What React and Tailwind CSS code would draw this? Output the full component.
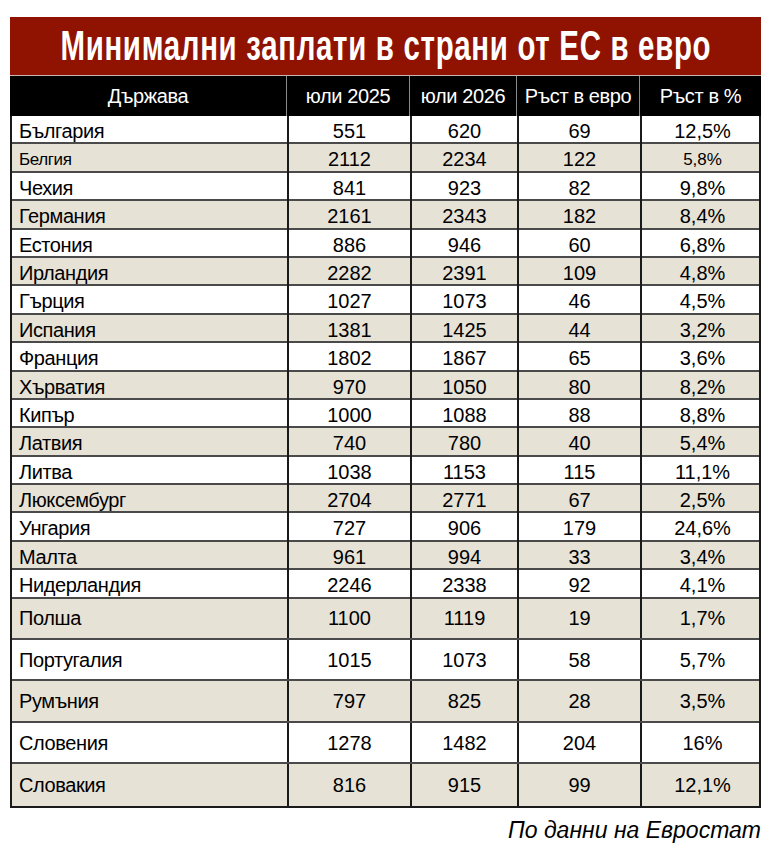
const rows = [
  ["България", "551", "620", "69", "12,5%"],
  ["Белгия", "2112", "2234", "122", "5,8%", true],
  ["Чехия", "841", "923", "82", "9,8%"],
  ["Германия", "2161", "2343", "182", "8,4%"],
  ["Естония", "886", "946", "60", "6,8%"],
  ["Ирландия", "2282", "2391", "109", "4,8%"],
  ["Гърция", "1027", "1073", "46", "4,5%"],
  ["Испания", "1381", "1425", "44", "3,2%"],
  ["Франция", "1802", "1867", "65", "3,6%"],
  ["Хърватия", "970", "1050", "80", "8,2%"],
  ["Кипър", "1000", "1088", "88", "8,8%"],
  ["Латвия", "740", "780", "40", "5,4%"],
  ["Литва", "1038", "1153", "115", "11,1%"],
  ["Люксембург", "2704", "2771", "67", "2,5%"],
  ["Унгария", "727", "906", "179", "24,6%"],
  ["Малта", "961", "994", "33", "3,4%"],
  ["Нидерландия", "2246", "2338", "92", "4,1%"],
  ["Полша", "1100", "1119", "19", "1,7%"],
  ["Португалия", "1015", "1073", "58", "5,7%"],
  ["Румъния", "797", "825", "28", "3,5%"],
  ["Словения", "1278", "1482", "204", "16%"],
  ["Словакия", "816", "915", "99", "12,1%"],
];

const cols = "grid grid-cols-[277px_123px_107px_123px_121px]";

function Row({ data, index }) {
  const [name, a, b, c, d, small] = data;
  const tall = index >= 17;
  const bg = index % 2 === 1 ? "bg-[#e7e2d6]" : "bg-white";
  const h = tall ? "h-[41.4px]" : "h-[28.4px]";
  const size = small ? "text-[17px]" : "text-[20px]";
  return (
    <div className={`${cols} ${bg} ${h} border-b-2 border-[#4a4a4a] last:border-b-0 text-black`}>
      <div className={`flex items-center pl-[7px] border-r-2 border-[#1a1a1a] ${size} tracking-[-0.4px]`}>{name}</div>
      <div className="flex items-center justify-center border-r-2 border-[#1a1a1a] text-[20px]">{a}</div>
      <div className="flex items-center justify-center border-r-2 border-[#1a1a1a] text-[20px]">{b}</div>
      <div className="flex items-center justify-center border-r-2 border-[#1a1a1a] text-[20px]">{c}</div>
      <div className={`flex items-center justify-center ${size}`}>{d}</div>
    </div>
  );
}

export default function App() {
  return (
    <div className="w-[771px] h-[849px] bg-white pt-[17px] px-[10px] font-['Liberation_Sans',Arial,sans-serif]">
      <div className="w-[751px]">
        <div className="h-[59px] bg-[#8f1300] flex items-center justify-center overflow-hidden border-b border-[#c9b5b0]">
          <span className="inline-block whitespace-nowrap text-white font-bold text-[42px] leading-none scale-x-[0.7] tracking-[1px]">
            Минимални заплати в страни от ЕС в евро
          </span>
        </div>
        <div className={`${cols} h-[40px] bg-black text-white text-[20px] tracking-[-0.4px]`}>
          <div className="flex items-center justify-center border-r border-[#8a8a8a]">Държава</div>
          <div className="flex items-center justify-center border-r border-[#8a8a8a]">юли 2025</div>
          <div className="flex items-center justify-center border-r border-[#8a8a8a]">юли 2026</div>
          <div className="flex items-center justify-center border-r border-[#8a8a8a]">Ръст в евро</div>
          <div className="flex items-center justify-center">Ръст в %</div>
        </div>
        <div className="border-x-2 border-b-2 border-[#1a1a1a]">
          {rows.map((r, i) => (
            <Row key={r[0]} data={r} index={i} />
          ))}
        </div>
        <div className="flex justify-end mt-[5px] text-[23px] italic text-black">
          По данни на Евростат
        </div>
      </div>
    </div>
  );
}
